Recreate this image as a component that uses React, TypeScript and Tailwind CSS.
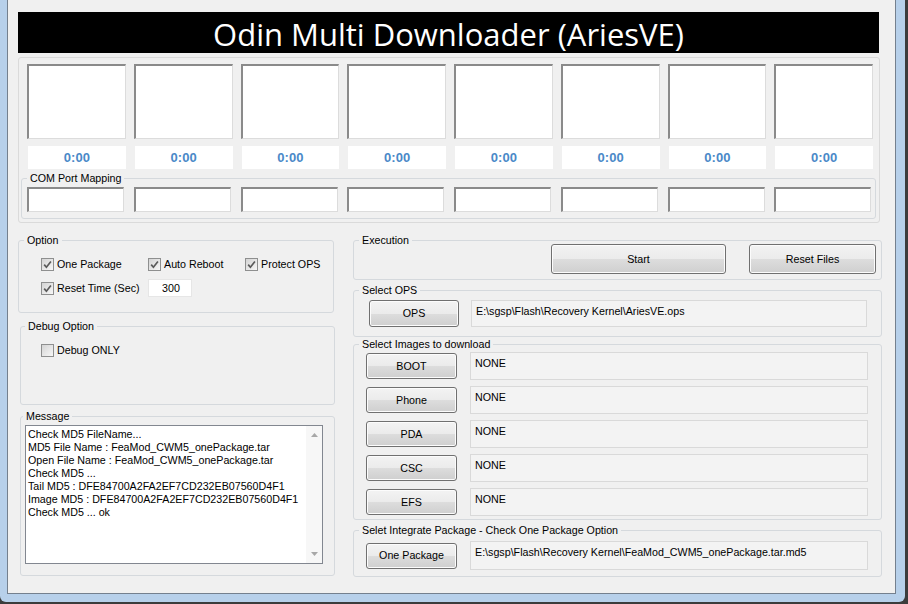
import React from "react";

const btn =
  "flex items-center justify-center rounded-[3px] border border-[#707070] bg-[linear-gradient(180deg,#f3f3f3_0%,#ebebeb_50%,#dddddd_50%,#cfcfcf_100%)] text-black shadow-[inset_0_0_0_1px_#fcfcfc]";
const field = "border border-[#d9d9d9] bg-[#f3f3f3] pl-[4px] pt-[4px] leading-[13px] whitespace-nowrap";
const sunken =
  "bg-white border-t-2 border-l-2 border-r border-b border-t-[#8a8a8a] border-l-[#8a8a8a] border-r-[#dcdcdc] border-b-[#dcdcdc]";
const group = "border border-[#d5d9dd] rounded-[3px] m-0 p-0 min-w-0";
const legend = "px-[3px] leading-[13px] whitespace-nowrap";

function Check({ checked, label, className = "" }: { checked: boolean; label: string; className?: string }) {
  return (
    <div className={`flex items-center gap-[3px] h-[16px] ${className}`}>
      <span className="w-[13px] h-[13px] border border-[#8e8f8f] bg-[linear-gradient(135deg,#d4d4d4,#f7f7f7)] flex items-center justify-center shrink-0">
        {checked && (
          <svg width="9" height="9" viewBox="0 0 9 9">
            <path d="M1.2 4.6 L3.4 7.2 L7.9 1.4" stroke="#5a5a5a" strokeWidth="1.7" fill="none" />
          </svg>
        )}
      </span>
      <span className="whitespace-nowrap">{label}</span>
    </div>
  );
}

const messages = [
  "Check MD5 FileName...",
  "MD5 File Name : FeaMod_CWM5_onePackage.tar",
  "Open File Name : FeaMod_CWM5_onePackage.tar",
  "Check MD5 ...",
  "Tail MD5 : DFE84700A2FA2EF7CD232EB07560D4F1",
  "Image MD5 : DFE84700A2FA2EF7CD232EB07560D4F1",
  "Check MD5 ... ok",
];

const images = ["BOOT", "Phone", "PDA", "CSC", "EFS"];
const slots = [0, 1, 2, 3, 4, 5, 6, 7];

export default function App() {
  return (
    <div className="w-[908px] h-[604px] bg-[#3c3c3c] overflow-hidden font-['Liberation_Sans',Arial,sans-serif] text-[10.7px] text-black">
      <div className="w-[905px] h-[602px] bg-[#b7d0ea] pl-[7px] pr-[9px] pb-[8px] rounded-b-[6px] flex">
        <div className="w-[889px] h-[594px] bg-[#f0f0f0] border border-t-0 border-[#74808e] pl-[10px] pt-[12px]">
          <div className="w-[861px] h-[41px] bg-black text-white flex items-center justify-center pt-[3px] font-['Open_Sans',sans-serif] text-[31px] leading-none">
            Odin Multi Downloader (AriesVE)
          </div>

          <div className="mt-[4px] w-[862px] h-[166px] border border-[#dadada] rounded-[3px] pl-[8px] pr-[6px] pt-[6px]">
            <div className="grid grid-cols-8 gap-x-[8px] w-[846px]">
              {slots.map((i) => (
                <div key={i} className={`h-[75px] ${sunken}`} />
              ))}
            </div>
            <div className="grid grid-cols-8 gap-x-[8px] w-[846px] mt-[7px]">
              {slots.map((i) => (
                <div key={i} className="ml-[1px] h-[23px] bg-white flex items-center justify-center font-bold text-[13px] text-[#4a89c8]">
                  0:00
                </div>
              ))}
            </div>
            <fieldset className={`${group} mt-[3px] -ml-[6px] w-[855px] h-[47px]`}>
              <legend className={`${legend} ml-[5px]`}>COM Port Mapping</legend>
              <div className="pl-[5px] pt-[2px] grid grid-cols-8 gap-x-[8px] w-[851px]">
                {slots.map((i) => (
                  <div key={i} className={`w-[97px] h-[25px] ${sunken}`} />
                ))}
              </div>
            </fieldset>
          </div>

          <div className="mt-[11px] flex gap-[19px]">
            <div className="w-[316px] flex flex-col">
              <fieldset className={`${group} h-[79px]`}>
                <legend className={`${legend} ml-[5px]`}>Option</legend>
                <div className="pl-[22px] pt-[9px]">
                  <div className="flex items-center">
                    <Check checked label="One Package" className="w-[107px]" />
                    <Check checked label="Auto Reboot" className="w-[97px]" />
                    <Check checked label="Protect OPS" />
                  </div>
                  <div className="mt-[7px] flex items-center">
                    <Check checked label="Reset Time (Sec)" className="w-[107px]" />
                    <div className="w-[44px] h-[18px] bg-white border border-[#e6e6e6] pl-[13px] flex items-center">300</div>
                  </div>
                </div>
              </fieldset>

              <fieldset className={`${group} mt-[7px] ml-[2px] w-[315px] h-[85px]`}>
                <legend className={`${legend} ml-[4px]`}>Debug Option</legend>
                <div className="pl-[20px] pt-[9px]">
                  <Check checked={false} label="Debug ONLY" />
                </div>
              </fieldset>

              <fieldset className={`${group} mt-[5px] ml-[2px] w-[315px] h-[166px]`}>
                <legend className={`${legend} ml-[2px]`}>Message</legend>
                <div className="pl-[4px] pt-[2px]">
                  <div className="w-[298px] h-[139px] bg-white border border-[#828790] flex">
                    <div className="flex-1 pl-[2px] pt-[2px] leading-[13px] whitespace-nowrap overflow-hidden">
                      {messages.map((m) => (
                        <div key={m}>{m}</div>
                      ))}
                    </div>
                    <div className="w-[16px] bg-[#f7f7f7] flex flex-col items-center justify-between py-[7px]">
                      <svg width="7" height="4" viewBox="0 0 7 4">
                        <path d="M0 4 L3.5 0 L7 4 Z" fill="#a8a8a8" />
                      </svg>
                      <svg width="7" height="4" viewBox="0 0 7 4">
                        <path d="M0 0 L3.5 4 L7 0 Z" fill="#a8a8a8" />
                      </svg>
                    </div>
                  </div>
                </div>
              </fieldset>
            </div>

            <div className="w-[529px] flex flex-col">
              <fieldset className={`${group} h-[46px]`}>
                <legend className={`${legend} ml-[5px]`}>Execution</legend>
                <div className="-mt-[3px] pr-[5px] flex justify-end gap-[23px]">
                  <div className={`${btn} w-[175px] h-[30px]`}>Start</div>
                  <div className={`${btn} w-[127px] h-[30px]`}>Reset Files</div>
                </div>
              </fieldset>

              <fieldset className={`${group} mt-[4px] h-[53px]`}>
                <legend className={`${legend} ml-[5px]`}>Select OPS</legend>
                <div className="mt-[3px] pl-[15px] flex items-center">
                  <div className={`${btn} w-[90px] h-[27px]`}>OPS</div>
                  <div className={`${field} ml-[12px] w-[396px] h-[27px]`}>{"E:\\sgsp\\Flash\\Recovery Kernel\\AriesVE.ops"}</div>
                </div>
              </fieldset>

              <fieldset className={`${group} mt-[1px] h-[182px]`}>
                <legend className={`${legend} ml-[5px]`}>Select Images to download</legend>
                <div className="mt-[1px] pl-[12px] flex flex-col gap-[6px]">
                  {images.map((name) => (
                    <div key={name} className="flex items-center h-[28px]">
                      <div className={`${btn} w-[91px] h-[26px]`}>{name}</div>
                      <div className={`${field} ml-[13px] w-[398px] h-[28px]`}>NONE</div>
                    </div>
                  ))}
                </div>
              </fieldset>

              <fieldset className={`${group} mt-[4px] h-[53px]`}>
                <legend className={`${legend} ml-[5px]`}>Selet Integrate Package - Check One Package Option</legend>
                <div className="mt-[4px] pl-[12px] flex items-center h-[29px]">
                  <div className={`${btn} w-[91px] h-[26px] border-[#3c7fb1]`}>One Package</div>
                  <div className={`${field} ml-[13px] w-[398px] h-[29px]`}>
                    {"E:\\sgsp\\Flash\\Recovery Kernel\\FeaMod_CWM5_onePackage.tar.md5"}
                  </div>
                </div>
              </fieldset>
            </div>
          </div>
        </div>
      </div>
    </div>
  );
}
